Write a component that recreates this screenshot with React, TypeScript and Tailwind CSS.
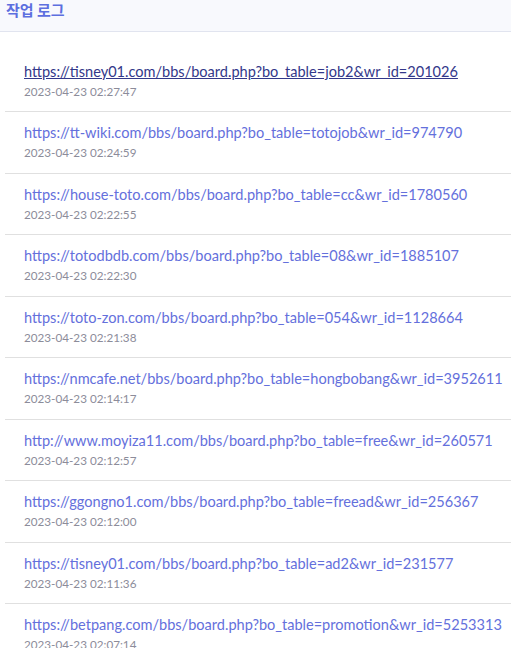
import React from "react";

const rows = [
  ["https://tisney01.com/bbs/board.php?bo_table=job2&wr_id=201026", "2023-04-23 02:27:47"],
  ["https://tt-wiki.com/bbs/board.php?bo_table=totojob&wr_id=974790", "2023-04-23 02:24:59"],
  ["https://house-toto.com/bbs/board.php?bo_table=cc&wr_id=1780560", "2023-04-23 02:22:55"],
  ["https://totodbdb.com/bbs/board.php?bo_table=08&wr_id=1885107", "2023-04-23 02:22:30"],
  ["https://toto-zon.com/bbs/board.php?bo_table=054&wr_id=1128664", "2023-04-23 02:21:38"],
  ["https://nmcafe.net/bbs/board.php?bo_table=hongbobang&wr_id=3952611", "2023-04-23 02:14:17"],
  ["http://www.moyiza11.com/bbs/board.php?bo_table=free&wr_id=260571", "2023-04-23 02:12:57"],
  ["https://ggongno1.com/bbs/board.php?bo_table=freead&wr_id=256367", "2023-04-23 02:12:00"],
  ["https://tisney01.com/bbs/board.php?bo_table=ad2&wr_id=231577", "2023-04-23 02:11:36"],
  ["https://betpang.com/bbs/board.php?bo_table=promotion&wr_id=5253313", "2023-04-23 02:07:14"],
];

export default function App() {
  return (
    <div className="w-[511px] h-[648px] overflow-hidden bg-white" style={{ fontFamily: "Lato, 'Noto Sans CJK KR', sans-serif" }}>
      <div className="h-[32px] bg-[#f8f9fd] border-b border-[#e1e4ef] px-[6px]">
        <div className="text-[15px] leading-[20px] font-semibold text-[#5d6fdf]" style={{ fontFamily: "'Noto Sans CJK KR', sans-serif" }}>작업 로그</div>
      </div>
      <div className="pl-[5px] pt-[18.5px]">
        {rows.map(([url, date], i) => (
          <div key={i} className={"pl-[19px] pt-[11px] pb-[11.5px] " + (i < rows.length - 1 ? "border-b border-[#e0e0e0]" : "")}>
            <div className={"text-[14.55px] leading-[20px] whitespace-nowrap " + (i === 0 ? "text-[#33388a] underline" : "text-[#6470dc]")}>{url}</div>
            <div className="text-[11.7px] leading-[18px] text-[#8c8c9a]">{date}</div>
          </div>
        ))}
      </div>
    </div>
  );
}
